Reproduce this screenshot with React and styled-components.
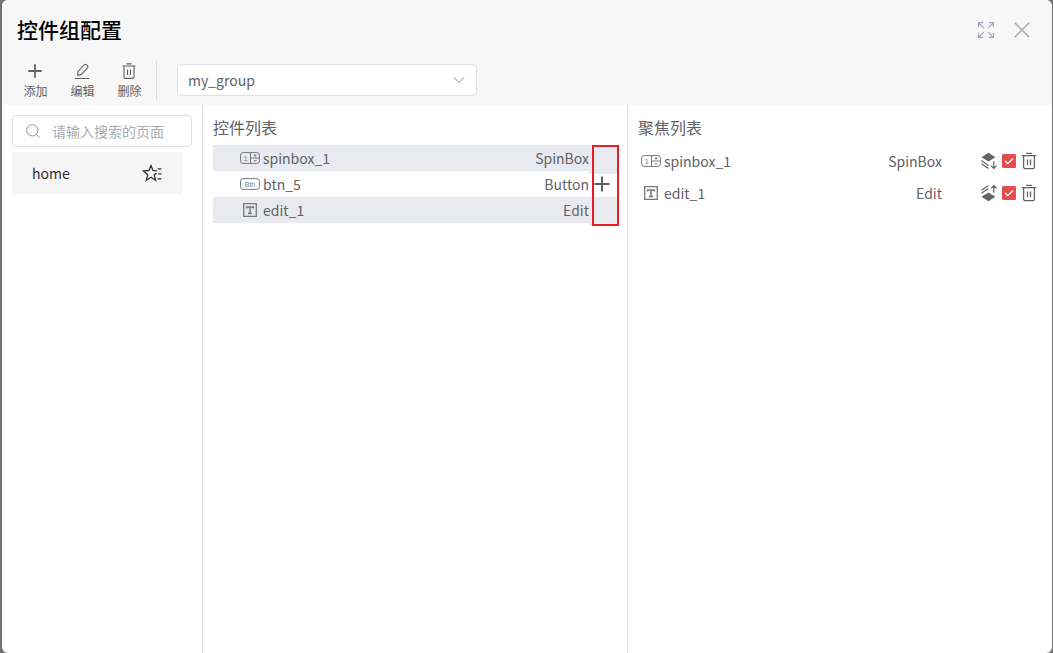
import { useState } from 'react'
import styled, { createGlobalStyle } from 'styled-components'

const GlobalStyle = createGlobalStyle`
  * {
    box-sizing: border-box;
  }
  body {
    margin: 0;
    background: #737373;
    color: #606266;
    font-family: "Noto Sans CJK SC", "Noto Sans", sans-serif;
    font-size: 14px;
  }
  button, input, select {
    font-family: inherit;
    color: inherit;
  }
  svg {
    display: block;
    flex: none;
    fill: none;
    stroke: currentColor;
  }
`

const Dialog = styled.div`
  display: flex;
  flex-direction: column;
  min-height: 100vh;
  margin: 0 1px 0 2px;
  overflow: hidden;
  border-radius: 6px;
  background: #fff;
`
const Header = styled.header`
  background: #f7f7f7;
`
const TitleBar = styled.div`
  display: flex;
  align-items: center;
  gap: 20px;
  height: 60px;
  padding: 0 22px 0 15px;
`
const Title = styled.h1`
  flex: 1;
  margin: 0;
  padding-bottom: 2px;
  color: #000;
  font-size: 21px;
  font-weight: 500;
  line-height: 28px;
`
const IconButton = styled.button`
  display: flex;
  align-items: center;
  justify-content: center;
  padding: 0;
  border: 0;
  background: none;
  color: ${props => props.$color || '#606266'};
  cursor: pointer;
`
const Toolbar = styled.div`
  display: flex;
  align-items: flex-start;
  height: 45px;
  padding-left: 10px;
`
const Tool = styled.button`
  display: flex;
  flex-direction: column;
  align-items: center;
  width: 47px;
  padding: 0;
  border: 0;
  background: none;
  font-size: 12px;
  line-height: 18px;
  cursor: pointer;
`
const ToolIcon = styled.span`
  display: flex;
  align-items: center;
  justify-content: center;
  height: 22px;
  padding-right: 2px;
`
const Divider = styled.span`
  width: 1px;
  height: 41px;
  margin: 0 20px 0 3px;
  background: #dcdfe6;
`
const SelectBox = styled.label`
  position: relative;
  width: 300px;
  margin-top: 4px;

  select {
    display: block;
    width: 100%;
    height: 32px;
    padding: 0 30px 0 10px;
    border: 1px solid #dcdfe6;
    border-radius: 4px;
    background: #fff;
    font-size: 14px;
    appearance: none;
  }
  svg {
    position: absolute;
    top: 9px;
    right: 11px;
    color: #b4b8c0;
    pointer-events: none;
  }
`
const Body = styled.main`
  display: flex;
  flex: 1;
`
const Pages = styled.aside`
  flex: 0 0 200px;
  padding: 10px;
`
const Search = styled.label`
  display: flex;
  align-items: center;
  gap: 12px;
  height: 32px;
  padding: 0 13px;
  border: 1px solid #dcdfe6;
  border-radius: 4px;
  color: #909399;

  input {
    width: 100%;
    min-width: 0;
    padding: 0;
    border: 0;
    outline: 0;
    background: none;
    font-size: 14px;
  }
  input::placeholder {
    color: #a8abb2;
    opacity: 1;
  }
`
const Page = styled.div`
  display: flex;
  align-items: center;
  justify-content: space-between;
  height: 42px;
  margin: 5px 10px 0 0;
  padding: 0 20px;
  background: #f5f5f5;
  color: #303133;
`
const Panel = styled.section`
  flex: 1;
  min-width: 0;
  padding: 10px;
  border-left: 1px solid #e4e4e8;
`
const PanelTitle = styled.h2`
  margin: 0 0 6px;
  font-size: 16px;
  font-weight: 400;
  line-height: 24px;
`
const List = styled.ul`
  position: relative;
  margin: 0;
  padding: 0;
  list-style: none;
`
const Row = styled.li`
  display: flex;
  align-items: flex-start;
  height: 26px;
  padding-left: 27px;
  background: ${props => (props.$used ? '#e9eaef' : 'transparent')};
  line-height: 26px;
`
const Kind = styled.span`
  display: flex;
  align-items: center;
  justify-content: center;
  width: 20px;
  height: 26px;
  margin-right: 3px;
  color: #77787c;
`
const Name = styled.span`
  flex: 1;
`
const Action = styled.span`
  display: flex;
  align-items: flex-start;
  width: 28px;
  height: 29px;
  padding: 3px;
  background: inherit;
`
const Marker = styled.span`
  position: absolute;
  top: 0;
  right: -2px;
  width: 27px;
  height: 81px;
  border: 2px solid #ec1c24;
  pointer-events: none;
`
const FocusRow = styled.li`
  display: flex;
  align-items: center;
  height: 32px;
  padding: 0 5px 0 3px;
  line-height: 32px;
`
const Actions = styled.span`
  display: flex;
  align-items: center;
  gap: 5px;
  margin-left: 37px;
`
const Check = styled.label`
  position: relative;
  display: flex;
  color: #fff;

  input {
    width: 14px;
    height: 14px;
    margin: 0;
    border: 1px solid #e34d4d;
    border-radius: 1px;
    background: #fff;
    appearance: none;
  }
  input:checked {
    background: #e34d4d;
  }
  svg {
    position: absolute;
    top: 0;
    left: 0;
    pointer-events: none;
  }
`
const Glyph = styled.text`
  fill: currentColor;
  stroke: none;
  font-family: "Liberation Sans", sans-serif;
  font-size: 7px;
  text-anchor: middle;
`

const PlusIcon = ({ size = 20 }) => (
  <svg width={size} height={size} viewBox="0 0 20 20" strokeWidth="2">
    <path d="M10 2.5v15M2.5 10h15" />
  </svg>
)

const PencilIcon = () => (
  <svg width="20" height="20" viewBox="0 0 20 20" strokeWidth="1.1">
    <path d="M5.6 14.2l.6-4 6-6.4a1.8 1.8 0 0 1 2.4 0l.8.8a1.8 1.8 0 0 1 0 2.4l-6 6.4zM3 17.5h14.5" />
  </svg>
)

const TrashIcon = () => (
  <svg width="16" height="18" viewBox="0 0 16 18" strokeWidth="1.3">
    <path d="M.8 3.7h14.4M5.2 1.3h5.6M2.6 3.7v11.4a1.6 1.6 0 0 0 1.6 1.6h7.6a1.6 1.6 0 0 0 1.6-1.6V3.7M6.5 7.5v5.6M9.5 7.5v5.6" />
  </svg>
)

const ToolTrashIcon = () => (
  <svg width="16" height="18" viewBox="0 0 16 18" strokeWidth="1.1">
    <path d="M1.5 4h13M5.5 1.9h5M3 4v11a1.4 1.4 0 0 0 1.4 1.4h7.2A1.4 1.4 0 0 0 13 15V4M6.5 7.5v5.6M9.5 7.5v5.6" />
  </svg>
)

const ExpandIcon = () => (
  <svg width="16" height="16" viewBox="0 0 16 16" strokeWidth="1.2">
    <path d="M.6 5V.6H5M11 .6h4.4V5M15.4 11v4.4H11M5 15.4H.6V11M.6.6l5.2 5.2M15.4.6l-5.2 5.2M15.4 15.4l-5.2-5.2M.6 15.4l5.2-5.2" />
  </svg>
)

const CloseIcon = () => (
  <svg width="16" height="16" viewBox="0 0 16 16" strokeWidth="1.4">
    <path d="M.8.8l14.4 14.4M15.2.8L.8 15.2" />
  </svg>
)

const SearchIcon = () => (
  <svg width="14" height="14" viewBox="0 0 14 14">
    <circle cx="6.3" cy="6.3" r="5.6" />
    <path d="M10.4 10.4l3 3" />
  </svg>
)

const StarIcon = () => (
  <svg width="20" height="18" viewBox="0 0 20 18" strokeWidth="1.3">
    <path d="M14.8 6.9l-3.9-.4L9 1.6 7 6.5l-5.6.5 4.3 3.7-1.4 5.5L9 13.2l4.6 3-1.3-5.3 2.2-2M15.6 4.8h3.8M16.3 9.8h3.1M15.6 14.8h3.8" />
  </svg>
)

const KindIcon = ({ type }) => {
  if (type === 'SpinBox') {
    return (
      <svg width="20" height="12" viewBox="0 0 20 12">
        <rect x=".6" y=".6" width="18.8" height="10.8" rx="2.5" />
        <path d="M10.5.6v10.8M10.5 6h8.9M13.8 8.8h2.6M13.8 3.4h2.6M15.1 2.2v2.4" />
        <Glyph x="5.6" y="8.5">1</Glyph>
      </svg>
    )
  }
  if (type === 'Button') {
    return (
      <svg width="20" height="12" viewBox="0 0 20 12">
        <rect x=".6" y=".6" width="18.8" height="10.8" rx="2.5" />
        <Glyph x="10" y="8.5">Btn</Glyph>
      </svg>
    )
  }
  return (
    <svg width="14" height="14" viewBox="0 0 14 14" strokeWidth="1.3">
      <path d="M.7.7h12.6v12.6H.7z" />
      <path strokeWidth="1.5" d="M3.6 5.6V3.9h6.8v1.7M7 3.9v6.4M5 10.4h4" />
    </svg>
  )
}

const MoveIcon = ({ up }) => (
  <svg width="18" height="18" viewBox="0 0 18 18" strokeWidth="1.2">
    {up ? (
      <>
        <path fill="currentColor" stroke="none" d="M9.5 8.6l6.8 4.2-6.8 4.4-7-4.4z" />
        <path d="M2.4 6.2l7-4.8M2.4 9.3l7-4.8M14.8 8.8V1.6M12 4.4l2.8-2.9 2.8 2.9" />
      </>
    ) : (
      <>
        <path fill="currentColor" stroke="none" d="M9.5.8l6.8 4.4-6.8 4.2-7-4.2z" />
        <path d="M2.4 8.6l7 4.8M2.4 11.7l7 4.8M14.8 9.2v7.2M12 13.6l2.8 2.9 2.8-2.9" />
      </>
    )}
  </svg>
)

const widgets = [
  { name: 'spinbox_1', type: 'SpinBox', used: true },
  { name: 'btn_5', type: 'Button', used: false },
  { name: 'edit_1', type: 'Edit', used: true }
]

const FocusItem = ({ item, up }) => {
  const [checked, setChecked] = useState(true)
  return <FocusRow>
    <Kind><KindIcon type={item.type} /></Kind>
    <Name>{item.name}</Name>
    <span>{item.type}</span>
    <Actions>
      <IconButton aria-label="移动"><MoveIcon up={up} /></IconButton>
      <Check>
        <input type="checkbox" aria-label={item.name} checked={checked} onChange={() => setChecked(!checked)} />
        <svg width="14" height="14" viewBox="0 0 14 14" strokeWidth="1.2">
          <path d="M3 7l2.7 2.7L11 4.5" />
        </svg>
      </Check>
      <IconButton aria-label="删除"><TrashIcon /></IconButton>
    </Actions>
  </FocusRow>
}

const App = () => {
  const [search, setSearch] = useState('')
  const focused = widgets.filter(w => w.used)

  return <>
    <GlobalStyle />
    <Dialog>
      <Header>
        <TitleBar>
          <Title>控件组配置</Title>
          <IconButton $color="#a5a8b8" aria-label="全屏"><ExpandIcon /></IconButton>
          <IconButton $color="#a5a8b8" aria-label="关闭"><CloseIcon /></IconButton>
        </TitleBar>
        <Toolbar>
          <Tool><ToolIcon><PlusIcon size={18} /></ToolIcon>添加</Tool>
          <Tool><ToolIcon><PencilIcon /></ToolIcon>编辑</Tool>
          <Tool><ToolIcon><ToolTrashIcon /></ToolIcon>删除</Tool>
          <Divider />
          <SelectBox>
            <select aria-label="控件组">
              <option>my_group</option>
            </select>
            <svg width="14" height="14" viewBox="0 0 14 14" strokeWidth="1.2">
              <path d="M2 4.5l5 5 5-5" />
            </svg>
          </SelectBox>
        </Toolbar>
      </Header>

      <Body>
        <Pages>
          <Search>
            <SearchIcon />
            <input
              aria-label="搜索"
              placeholder="请输入搜索的页面"
              value={search}
              onChange={e => setSearch(e.target.value)}
            />
          </Search>
          <Page>
            <span>home</span>
            <StarIcon />
          </Page>
        </Pages>

        <Panel>
          <PanelTitle>控件列表</PanelTitle>
          <List>
            {
              widgets.map(w => <Row key={w.name} $used={w.used}>
                <Kind><KindIcon type={w.type} /></Kind>
                <Name>{w.name}</Name>
                <span>{w.type}</span>
                <Action>
                  {!w.used && <IconButton aria-label="添加"><PlusIcon /></IconButton>}
                </Action>
              </Row>)
            }
            <Marker />
          </List>
        </Panel>

        <Panel>
          <PanelTitle>聚焦列表</PanelTitle>
          <List>
            {focused.map((w, i) => <FocusItem key={w.name} item={w} up={i > 0} />)}
          </List>
        </Panel>
      </Body>
    </Dialog>
  </>
}

export default App
